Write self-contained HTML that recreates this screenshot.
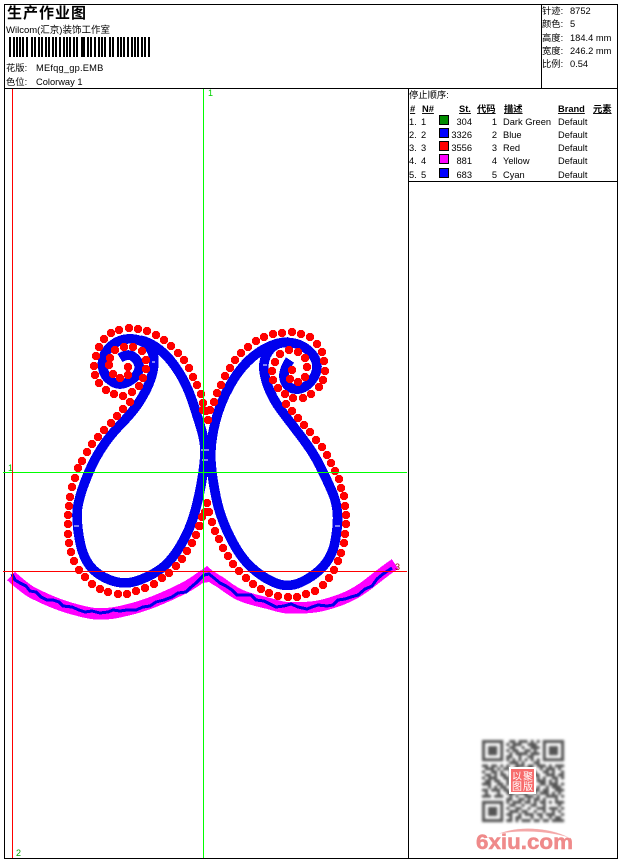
<!DOCTYPE html>
<html><head><meta charset="utf-8"><style>
html,body{margin:0;padding:0;background:#fff}
svg{display:block}
text{font-family:"Liberation Sans","WenQuanYi Zen Hei","Noto Sans CJK SC",sans-serif;font-size:9.3px;fill:#000}
.b{font-weight:bold}
.u{text-decoration:underline}
</style></head><body>
<svg width="620" height="860" viewBox="0 0 620 860" xmlns="http://www.w3.org/2000/svg">
<defs><filter id="bl" x="-5%" y="-5%" width="110%" height="110%"><feGaussianBlur stdDeviation=".45"/></filter></defs>
<rect width="620" height="860" fill="#fff"/>
<g stroke="#000" stroke-width="1" shape-rendering="crispEdges" fill="none">
<rect x="4.5" y="4.5" width="613" height="854"/>
<path d="M4 88.5H618M541.5 4V88M408.5 88V858M408 181.5H618"/>
</g>
<!-- header -->
<text x="7" y="18" class="b" style="font-size:15px;letter-spacing:1px">生产作业图</text>
<text x="6" y="33" style="font-size:9.5px">Wilcom(汇京)装饰工作室</text>
<path shape-rendering="crispEdges" fill="none" stroke="#000" stroke-width="2" d="M10 37V57M14 37V57M17 37V57M20 37V57M23 37V57M27 37V57M32 37V57M35 37V57M39 37V57M42 37V57M46 37V57M49 37V57M53 37V57M56 37V57M60 37V57M64 37V57M67 37V57M70 37V57M74 37V57M77 37V57M82 37V57M84 37V57M88 37V57M91 37V57M95 37V57M99 37V57M102 37V57M105 37V57M110 37V57M113 37V57M118 37V57M121 37V57M124 37V57M128 37V57M132 37V57M135 37V57M138 37V57M142 37V57M145 37V57M149 37V57"/>
<text x="6" y="71">花版:</text><text x="36" y="71" style="letter-spacing:.2px">MEfqg_gp.EMB</text>
<text x="6" y="85">色位:</text><text x="36" y="85">Colorway 1</text>
<!-- info -->
<text x="542" y="14">针迹:</text><text x="570" y="14">8752</text>
<text x="542" y="27">颜色:</text><text x="570" y="27">5</text>
<text x="542" y="41">高度:</text><text x="570" y="41">184.4 mm</text>
<text x="542" y="54">宽度:</text><text x="570" y="54">246.2 mm</text>
<text x="542" y="67">比例:</text><text x="570" y="67">0.54</text>
<!-- table -->
<text x="409" y="98">停止顺序:</text>
<g class="b">
<text x="410" y="112" class="b u">#</text><text x="422" y="112" class="b u">N#</text>
<text x="459" y="112" class="b u">St.</text><text x="477" y="112" class="b u">代码</text>
<text x="504" y="112" class="b u">描述</text><text x="558" y="112" class="b u">Brand</text><text x="593" y="112" class="b u">元素</text>
</g>
<g>
<text x="409" y="125">1.</text><text x="421" y="125">1</text><text x="472" y="125" text-anchor="end">304</text><text x="497" y="125" text-anchor="end">1</text><text x="503" y="125">Dark Green</text><text x="558" y="125">Default</text>
<text x="409" y="138">2.</text><text x="421" y="138">2</text><text x="472" y="138" text-anchor="end">3326</text><text x="497" y="138" text-anchor="end">2</text><text x="503" y="138">Blue</text><text x="558" y="138">Default</text>
<text x="409" y="151">3.</text><text x="421" y="151">3</text><text x="472" y="151" text-anchor="end">3556</text><text x="497" y="151" text-anchor="end">3</text><text x="503" y="151">Red</text><text x="558" y="151">Default</text>
<text x="409" y="164">4.</text><text x="421" y="164">4</text><text x="472" y="164" text-anchor="end">881</text><text x="497" y="164" text-anchor="end">4</text><text x="503" y="164">Yellow</text><text x="558" y="164">Default</text>
<text x="409" y="178">5.</text><text x="421" y="178">5</text><text x="472" y="178" text-anchor="end">683</text><text x="497" y="178" text-anchor="end">5</text><text x="503" y="178">Cyan</text><text x="558" y="178">Default</text>
</g>
<g stroke="#000" stroke-width="1" shape-rendering="crispEdges">
<rect x="439.5" y="115.5" width="9" height="9" fill="#008c00"/>
<rect x="439.5" y="128.5" width="9" height="9" fill="#0000ff"/>
<rect x="439.5" y="141.5" width="9" height="9" fill="#ff0000"/>
<rect x="439.5" y="154.5" width="9" height="9" fill="#ff00ff"/>
<rect x="439.5" y="168.5" width="9" height="9" fill="#0000ff"/>
</g>
<!-- magenta -->
<g fill="none" stroke-linejoin="round" shape-rendering="crispEdges">
<path stroke="#ff00ff" stroke-width="11.5" d="M11 576C20 584 27 590 33 593C45 599 60 606 77 610C88 613 94 614 100 614C112 614 120 612 127 610C137 608 145 605 153 602C163 598 172 594 180 590C189 586 196 581 204 575"/>
<path stroke="#ff00ff" stroke-width="11.5" d="M207 574C212 577 216 580 220 582C227 587 233 592 240 595C249 599 258 601 267 603C275 605 282 608 290 608C298 608 305 608 313 607C323 606 331 603 340 600C348 597 356 593 363 588C370 583 376 578 380 575C385 571 389 568 395 564"/>
<path fill="#ff00ff" stroke="none" d="M199 572L207 566L214 572L209 582L203 583Z"/>
<path stroke="#0000e6" stroke-width="3" d="M12 574L15 580L20 583L26 586L30 591L36 592L41 597L47 600L53 600L59 602L63 606L72 607L79 610L85 612L92 611L100 613L108 612L113 610L120 611L127 610L136 610L143 607L150 606L156 602L164 600L172 597L178 593L186 592L190 588L196 583L204 575L209 574L214 578L220 583L226 586L232 590L237 595L245 595L251 595L256 600L264 601L270 604L276 607L284 606L291 604L298 607L307 609L312 607L318 605L327 606L333 605L338 600L345 599L351 597L358 595L365 589L372 586L377 579L383 574L392 568"/>
</g>
<!-- blue -->
<g fill="none" stroke="#0000ee" stroke-width="9.6" stroke-linejoin="round" stroke-linecap="butt" shape-rendering="crispEdges">
<path d="M120 358Q128 353 133 356.5Q138 360 139 365Q140 370 136.5 375Q133 380 125.5 383Q118 386 110.5 380.5Q103 375 102.5 365Q102 355 109.5 347.5Q117 340 127 339Q137 338 144.5 343Q152 348 153.5 356.5Q155 365 151.5 376.5Q148 388 140.5 400Q133 412 121.5 423.5Q110 435 101 449Q92 463 84.5 483Q77 503 77 515Q77 527 80 542Q83 557 90 566Q97 575 110 580Q123 585 135 581.5Q147 578 158.5 570.5Q170 563 180 546.5Q190 530 195 511.5Q200 493 202.5 476.5Q205 460 205 451Q205 442 201.5 430Q198 418 192.5 401.5Q187 385 178.5 371.5Q170 358 160 350Q150 342 140 340"/>
<path d="M290 360Q282 372 284.5 380Q287 388 295 389Q303 390 310 382.5Q317 375 317 366.5Q317 358 308.5 350.5Q300 343 288.5 342.5Q277 342 271 348.5Q265 355 264 363.5Q263 372 267.5 385Q272 398 281 410Q290 422 301.5 437Q313 452 320 466Q327 480 332 491.5Q337 503 337.5 515Q338 527 335 542Q332 557 322.5 567Q313 577 300.5 582.5Q288 588 275.5 583Q263 578 251.5 567.5Q240 557 230 537Q220 517 216 497Q212 477 211 462.5Q210 448 213.5 430Q217 412 225 395Q233 378 243 366.5Q253 355 265 348.5Q277 342 288 342"/>
</g>
<g stroke="#fff" stroke-width="1" shape-rendering="crispEdges"><path d="M201 450h8M202 460h6M74 526h5M335 526h5M263 365h4M155 362h-3"/></g>
<!-- red dots -->
<path fill="none" stroke="#ff0000" stroke-width="8.4" stroke-linecap="round" shape-rendering="crispEdges" d="M128 367h0M128 375h0M120 378h0M113 374h0M109 365h0M110 358h0M115 350h0M124 347h0M133 347h0M142 351h0M146 360h0M146 369h0M143 378h0M139 386h0M132 392h0M123 396h0M114 394h0M106 390h0M99 383h0M95 375h0M94 366h0M96 356h0M99 347h0M104 339h0M111 333h0M119 330h0M129 328h0M138 329h0M147 331h0M156 335h0M164 340h0M171 346h0M178 353h0M184 360h0M189 368h0M193 377h0M197 385h0M201 394h0M203 403h0M206 411h0M208 420h0M130 402h0M123 409h0M117 416h0M111 423h0M104 430h0M98 437h0M92 444h0M87 452h0M82 461h0M78 468h0M75 478h0M72 487h0M70 497h0M69 506h0M68 515h0M68 524h0M68 534h0M69 543h0M71 552h0M74 561h0M79 570h0M85 577h0M92 584h0M100 589h0M108 592h0M118 594h0M127 594h0M136 591h0M145 588h0M154 584h0M162 578h0M169 573h0M176 566h0M182 559h0M187 551h0M192 543h0M196 535h0M199 526h0M202 517h0M207 503h0M292 370h0M290 379h0M298 382h0M305 377h0M307 367h0M305 358h0M298 352h0M289 350h0M280 354h0M275 362h0M272 371h0M273 380h0M278 388h0M285 394h0M293 398h0M303 398h0M311 394h0M319 387h0M323 380h0M325 371h0M324 361h0M322 352h0M317 344h0M310 337h0M301 334h0M292 332h0M282 333h0M273 334h0M264 337h0M256 341h0M248 347h0M241 353h0M235 360h0M230 368h0M225 376h0M221 385h0M217 393h0M214 402h0M210 410h0M203 410h0M208 420h0M286 404h0M292 411h0M298 418h0M304 425h0M310 432h0M316 440h0M322 447h0M327 455h0M331 463h0M335 471h0M339 479h0M341 488h0M344 496h0M345 506h0M346 515h0M346 524h0M345 534h0M344 543h0M341 553h0M338 561h0M334 570h0M329 578h0M323 585h0M315 591h0M306 594h0M297 597h0M288 597h0M278 596h0M269 593h0M261 589h0M253 584h0M246 578h0M239 571h0M233 564h0M228 556h0M223 548h0M219 539h0M215 531h0M212 522h0M209 512h0M205 512h0M200 526h0"/>
<!-- guide lines -->
<g shape-rendering="crispEdges" stroke-width="1" fill="none">
<path stroke="#00ff00" d="M203.5 89V858M3 472.5H407"/>
<path stroke="#ff0000" d="M12.5 89V858M3 571.5H407"/>
</g>
<text x="208" y="96" style="font-size:9px;fill:#00d000">1</text>
<text x="8" y="471" style="font-size:9px;fill:#00d000">1</text>
<text x="16" y="856" style="font-size:9px;fill:#00a000">2</text>
<text x="395" y="570" style="font-size:9px;fill:#900">3</text>
<!-- QR -->
<g transform="translate(482 740) scale(3.04)" fill="none" stroke="#555" stroke-width="1" filter="url(#bl)">
<path d="M0 .5h7M9 .5h2M12 .5h3M16 .5h1M18 .5h1M20 .5h7
M0 1.5h1M6 1.5h1M8 1.5h1M10 1.5h3M15 1.5h3M20 1.5h1M26 1.5h1
M0 2.5h1M2 2.5h3M6 2.5h1M9 2.5h2M13 2.5h1M16 2.5h3M20 2.5h1M22 2.5h3M26 2.5h1
M0 3.5h1M2 3.5h3M6 3.5h1M8 3.5h1M10 3.5h2M14 3.5h2M17 3.5h1M20 3.5h1M22 3.5h3M26 3.5h1
M0 4.5h1M2 4.5h3M6 4.5h1M9 4.5h1M11 4.5h4M16 4.5h3M20 4.5h1M22 4.5h3M26 4.5h1
M0 5.5h1M6 5.5h1M8 5.5h2M12 5.5h1M15 5.5h2M20 5.5h1M26 5.5h1
M0 6.5h7M8 6.5h1M10 6.5h1M12 6.5h1M14 6.5h1M16 6.5h1M18 6.5h1M20 6.5h7
M9 7.5h3M13 7.5h1M17 7.5h2
M0 8.5h2M3 8.5h2M6 8.5h1M8 8.5h1M11 8.5h3M15 8.5h2M18 8.5h3M22 8.5h1M24 8.5h3
M1 9.5h3M5 9.5h1M7 9.5h2M10 9.5h2M14 9.5h3M19 9.5h1M21 9.5h3M25 9.5h1
M0 10.5h1M3 10.5h2M6 10.5h1M9 10.5h3M13 10.5h1M16 10.5h2M20 10.5h2M23 10.5h1M26 10.5h1
M1 11.5h2M4 11.5h1M6 11.5h2M9 11.5h1M17 11.5h2M21 11.5h3M25 11.5h2
M0 12.5h1M2 12.5h3M7 12.5h2M18 12.5h1M20 12.5h1M23 12.5h2M26 12.5h1
M1 13.5h2M4 13.5h2M8 13.5h1M18 13.5h3M22 13.5h1M24 13.5h1
M0 14.5h3M5 14.5h2M8 14.5h1M19 14.5h2M22 14.5h3M26 14.5h1
M2 15.5h1M4 15.5h1M6 15.5h2M18 15.5h1M21 15.5h1M23 15.5h2M25 15.5h1
M0 16.5h2M3 16.5h3M7 16.5h2M10 16.5h2M13 16.5h1M16 16.5h3M20 16.5h2M24 16.5h3
M1 17.5h1M5 17.5h1M8 17.5h3M12 17.5h3M17 17.5h1M19 17.5h3M23 17.5h1M25 17.5h1
M0 18.5h3M4 18.5h3M9 18.5h1M11 18.5h1M14 18.5h3M18 18.5h1M21 18.5h4M26 18.5h1
M8 19.5h2M12 19.5h2M15 19.5h1M17 19.5h2M20 19.5h1M24 19.5h1
M0 20.5h7M8 20.5h1M10 20.5h3M14 20.5h2M17 20.5h1M19 20.5h2M22 20.5h1M24 20.5h3
M0 21.5h1M6 21.5h1M9 21.5h2M13 21.5h1M16 21.5h2M20 21.5h1M25 21.5h1
M0 22.5h1M2 22.5h3M6 22.5h1M8 22.5h1M11 22.5h2M15 22.5h1M18 22.5h3M22 22.5h3M26 22.5h1
M0 23.5h1M2 23.5h3M6 23.5h1M9 23.5h3M13 23.5h2M17 23.5h1M20 23.5h1M23 23.5h1M25 23.5h1
M0 24.5h1M2 24.5h3M6 24.5h1M8 24.5h2M12 24.5h1M14 24.5h3M18 24.5h2M21 24.5h3M26 24.5h1
M0 25.5h1M6 25.5h1M9 25.5h1M11 25.5h2M16 25.5h1M19 25.5h1M22 25.5h1M24 25.5h2
M0 26.5h7M8 26.5h2M11 26.5h1M13 26.5h3M17 26.5h2M20 26.5h2M23 26.5h4"/>
</g>
<rect x="509" y="767" width="27" height="27" fill="#fff"/>
<rect x="511" y="769" width="23" height="23" fill="#f76c6c"/>
<text x="512" y="780" style="font-size:10px;fill:#fff">以</text><text x="523" y="780" style="font-size:10px;fill:#fff">聚</text>
<text x="512" y="790" style="font-size:10px;fill:#fff">图</text><text x="523" y="790" style="font-size:10px;fill:#fff">版</text>
<!-- logo -->
<text x="476" y="849" class="b" textLength="97" lengthAdjust="spacingAndGlyphs" style="font-size:21px;fill:#ef8a8a;stroke:#ef8a8a;stroke-width:.5px">6xiu.com</text>
<path d="M498 834C515 826 548 826 570 838C548 831 520 830 498 834Z" fill="#f4a8a8" stroke="#fff" stroke-width=".4"/>
</svg>
</body></html>
